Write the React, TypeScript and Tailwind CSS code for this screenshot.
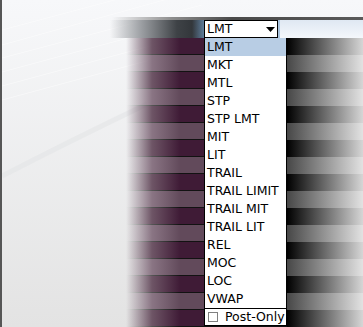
const ORDER_TYPES = [
  'LMT',
  'MKT',
  'MTL',
  'STP',
  'STP LMT',
  'MIT',
  'LIT',
  'TRAIL',
  'TRAIL LIMIT',
  'TRAIL MIT',
  'TRAIL LIT',
  'REL',
  'MOC',
  'LOC',
  'VWAP',
];

function Streaks() {
  return (
    <svg className="pointer-events-none absolute left-0 top-0" width="200" height="240" viewBox="0 0 200 240">
      <g stroke="#ffffff" strokeWidth="1" opacity="0.45">
        <path d="M0 30 L150 -10" />
        <path d="M0 45 L180 -5" />
        <path d="M0 58 L200 5" />
        <path d="M0 72 L200 18" />
        <path d="M0 86 L200 32" />
        <path d="M0 100 L200 46" />
      </g>
      <path d="M0 176 Q70 140 145 104" stroke="#e3e4e6" strokeWidth="5" fill="none" opacity="0.6" />
    </svg>
  );
}

function StripeRow({ dark }: { dark: boolean }) {
  return (
    <div className="flex h-[17px]">
      <div className="flex w-[285px] flex-col">
        <div
          className={
            dark
              ? 'h-[16px] bg-[linear-gradient(to_right,transparent_124px,#6e5566_150px,#3f1b36_178px)]'
              : 'h-[16px] bg-[linear-gradient(to_right,transparent_124px,#8a7584_150px,#624a5b_178px)]'
          }
        />
        <div className="h-px bg-[linear-gradient(to_right,transparent_124px,#555_150px,#121212_178px)]" />
      </div>
      <div
        className={
          dark
            ? 'flex-1 bg-[linear-gradient(to_right,#000000,#d6d6d6)]'
            : 'flex-1 bg-[linear-gradient(to_right,#474747,#e2e2e2)]'
        }
      />
    </div>
  );
}

export default function App() {
  const rows = Array.from({ length: 17 }, (_, i) => i);

  return (
    <div className="relative h-[327px] w-[363px] overflow-hidden border-l-2 border-[#565656] bg-[linear-gradient(#f7f8fa,#e3e3e3)] font-['DejaVu_Sans',sans-serif] text-[12.5px] leading-none text-black">
      <Streaks />

      <div className="relative flex h-[20px] flex-col justify-end">
        <div className="h-[3px] bg-[linear-gradient(to_right,transparent_110px,#8d8d8d_170px,#4a4a4a_230px,#5a5a5a)]" />
      </div>

      <div className="relative flex h-[18px]">
        <div className="w-[202px] bg-[linear-gradient(to_right,transparent_108px,#9a9da1_140px,#3e4246_175px,#33373b_190px,#5d7c9a_202px)]" />
        <div className="flex w-[74px] items-center justify-between border border-black bg-white pl-[2px] pr-[2px]">
          <span>LMT</span>
          <svg width="9" height="5" viewBox="0 0 9 5">
            <polygon points="0,0 9,0 4.5,5" fill="#000" />
          </svg>
        </div>
        <div className="flex-1 border-l-2 border-[#a9c3de] bg-[linear-gradient(#dfe8f2,#f4f7fb)]" />
      </div>

      <div className="relative">
        {rows.map((i) => (
          <StripeRow key={i} dark={i % 2 === 0} />
        ))}
      </div>

      <div className="absolute left-[202px] top-[38px] w-[83px] border-x border-b border-black bg-white">
        {ORDER_TYPES.map((t, i) => (
          <div key={t} className={`flex h-[18px] items-center pl-[2px] ${i === 0 ? 'bg-[#b8cde4]' : ''}`}>
            {t}
          </div>
        ))}
        <div className="flex h-[17px] items-center gap-[7px] border-t border-black pl-[3px]">
          <span className="h-[10px] w-[10px] border border-[#808080] bg-white" />
          <span>Post-Only</span>
        </div>
      </div>
    </div>
  );
}
